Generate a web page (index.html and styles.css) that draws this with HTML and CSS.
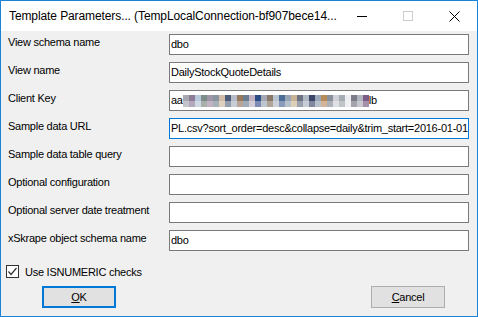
FILE: index.html
```html
<!DOCTYPE html>
<html lang="en">
<head>
    <meta charset="UTF-8">
    <title>Template Parameters</title>
    <link rel="stylesheet" href="styles.css">
</head>
<body>
    <div class="window">
        <!-- title bar -->
        <div class="titlebar">
            <span class="title">Template Parameters... (TempLocalConnection-bf907bece14...</span>
            <div class="caption-btns">
                <span class="cap-btn">
                    <svg width="10" height="10" viewBox="0 0 10 10"><path d="M0 5.5H10" stroke="#000" stroke-width="1"/></svg>
                </span>
                <span class="cap-btn">
                    <svg width="10" height="10" viewBox="0 0 10 10"><rect x="0.5" y="0.5" width="9" height="9" fill="none" stroke="#ccc" stroke-width="1"/></svg>
                </span>
                <span class="cap-btn">
                    <svg width="11" height="11" viewBox="0 0 11 11"><path d="M0.5 0.5L10.5 10.5M10.5 0.5L0.5 10.5" stroke="#000" stroke-width="1"/></svg>
                </span>
            </div>
        </div>

        <!-- form -->
        <div class="content">
            <div class="form-grid">
                <label>View schema name</label>
                <div class="field">dbo</div>

                <label>View name</label>
                <div class="field">DailyStockQuoteDetails</div>

                <label>Client Key</label>
                <div class="field">aa<span class="mosaic"></span>lb</div>

                <label>Sample data URL</label>
                <div class="field focused">PL.csv?sort_order=desc&amp;collapse=daily&amp;trim_start=2016-01-01<span class="caret"></span></div>

                <label>Sample data table query</label>
                <div class="field"></div>

                <label>Optional configuration</label>
                <div class="field"></div>

                <label>Optional server date treatment</label>
                <div class="field"></div>

                <label>xSkrape object schema name</label>
                <div class="field">dbo</div>
            </div>

            <div class="check-row">
                <span class="checkbox">
                    <svg width="11" height="11" viewBox="0 0 11 11"><path d="M1.5 5.5L4 8.5L9.5 2" fill="none" stroke="#333" stroke-width="1.2"/></svg>
                </span>
                <span>Use ISNUMERIC checks</span>
            </div>

            <div class="button-row">
                <button class="btn default"><u>O</u>K</button>
                <button class="btn"><u>C</u>ancel</button>
            </div>
        </div>
    </div>
</body>
</html>
```

FILE: styles.css
```css
body {
    margin: 0;
    font-family: "Liberation Sans", Arial, sans-serif;
    font-size: 11px;
    letter-spacing: -0.25px;
    color: #000;
    background: #fff;
}
.window {
    width: 476px;
    height: 315px;
    border: 1px solid #1883d7;
    background: #f0f0f0;
    display: flex;
    flex-direction: column;
}
.titlebar {
    height: 30px;
    background: #fff;
    display: flex;
    align-items: center;
    justify-content: space-between;
}
.title {
    font-size: 12px;
    padding-left: 8px;
    color: #000;
    letter-spacing: -0.1px;
}
.caption-btns {
    display: flex;
    height: 100%;
}
.cap-btn {
    width: 46px;
    display: flex;
    align-items: center;
    justify-content: center;
}
.content {
    padding: 3px 8px 0 7px;
}
.form-grid {
    display: grid;
    grid-template-columns: 161px 300px;
    grid-auto-rows: 21px;
    row-gap: 7px;
}
.form-grid label {
    line-height: 17px;
    white-space: nowrap;
}
.field {
    background: #fff;
    border: 1px solid #7a7a7a;
    box-sizing: border-box;
    padding-left: 1px;
    line-height: 19px;
    white-space: nowrap;
    overflow: hidden;
    display: flex;
    align-items: center;
}
.field.focused {
    border-color: #0078d7;
}
.caret {
    display: inline-block;
    width: 1px;
    height: 13px;
    background: #000;
    margin-left: 1px;
}
.mosaic {
    display: inline-block;
    width: 186px;
    height: 12px;
    background-repeat: no-repeat;
    background-size: 100% 6px;
    background-position: left top, left bottom;
    background-image:
        linear-gradient(to right,
            #a8a8b0 0 6px, #8c7c98 6px 12px, #b8c8dc 12px 18px, #7c8c88 18px 24px,
            #a094a8 24px 30px, #8894a0 30px 36px, #d0bca8 36px 42px, #4c5c78 42px 48px,
            #b4bcc8 48px 54px, #98785c 54px 60px, #6c7c90 60px 66px, #c0b0c0 66px 72px,
            #2c4c88 72px 78px, #a4a8b4 78px 84px, #887868 84px 90px, #b8c4d0 90px 96px,
            #4c6c98 96px 102px, #94a4b4 102px 108px, #c8b494 108px 114px, #6c7484 114px 120px,
            #b0b8c4 120px 126px, #3c4468 126px 132px, #98a8b8 132px 138px, #b88c58 138px 144px,
            #88909c 144px 150px, #d0d0d8 150px 156px, #a4acb4 156px 162px, #eceef2 162px 168px,
            #7c7c88 168px 174px, #b0b4bc 174px 180px, #7c5c88 180px 186px),
        linear-gradient(to right,
            #c4c4cc 0 6px, #b4a8bc 6px 12px, #d0d8e4 12px 18px, #a8b0ac 18px 24px,
            #c0b4c4 24px 30px, #a8b0b8 30px 36px, #dcd0c0 36px 42px, #949cb0 42px 48px,
            #c8ccd4 48px 54px, #b8a498 54px 60px, #a0acb8 60px 66px, #d4ccd4 66px 72px,
            #7c8cb4 72px 78px, #c0c4cc 78px 84px, #b0a498 84px 90px, #ccd0d8 90px 96px,
            #889cb8 96px 102px, #b8c0cc 102px 108px, #dcd0b8 108px 114px, #9aa0ac 114px 120px,
            #c8ccd4 120px 126px, #8088a0 126px 132px, #b8c0cc 132px 138px, #d4b498 138px 144px,
            #acb0b8 144px 150px, #e0e0e4 150px 156px, #c0c4c8 156px 162px, #f0f0f2 162px 168px,
            #a4a4ac 168px 174px, #c8cacf 174px 180px, #a490ac 180px 186px);
}
.check-row {
    display: flex;
    align-items: center;
    gap: 6px;
    margin-top: 13px;
    margin-left: -2px;
    height: 15px;
}
.checkbox {
    width: 11px;
    height: 11px;
    border: 1px solid #333;
    background: #fff;
    display: flex;
}
.button-row {
    display: flex;
    justify-content: space-between;
    margin-top: 7px;
    padding: 0 24px 0 34px;
}
.btn {
    width: 74px;
    height: 22px;
    box-sizing: border-box;
    font-family: "Liberation Sans", Arial, sans-serif;
    font-size: 11px;
    letter-spacing: -0.25px;
    background: #e1e1e1;
    border: 1px solid #adadad;
    padding: 0;
    color: #000;
}
.btn.default {
    border: 2px solid #0078d7;
}
```
